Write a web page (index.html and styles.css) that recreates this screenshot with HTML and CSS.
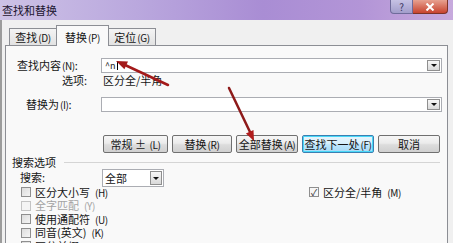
FILE: index.html
```html
<!DOCTYPE html>
<html lang="zh">
<head>
<meta charset="utf-8">
<title>查找和替换</title>
<link rel="stylesheet" href="styles.css">
</head>
<body>
<div class="win">
  <div class="titlebar">
    <span class="title">查找和替换</span>
    <div class="caps">
      <span class="help">?</span>
      <span class="close"><svg width="10" height="8" viewBox="0 0 10 8"><path d="M1.5 0.5 L8.5 7.5 M8.5 0.5 L1.5 7.5" stroke="#fff" stroke-width="2"/></svg></span>
    </div>
  </div>
  <div class="content">
    <div class="tabs">
      <div class="tab">查找<span class="mn">(D)</span></div>
      <div class="tab sel">替换<span class="mn">(P)</span></div>
      <div class="tab">定位<span class="mn">(G)</span></div>
    </div>
    <div class="panel">
      <div class="fields">
        <span class="lbl l1">查找内容<span class="mn">(N)</span>:</span>
        <div class="combo"><span class="val">^n</span><span class="caret"></span><span class="dd"></span></div>
        <span class="lbl l2">选项:</span>
        <span class="optval">区分全/半角</span>
        <span class="lbl l3">替换为<span class="mn">(I)</span>:</span>
        <div class="combo"><span class="dd"></span></div>
      </div>
      <div class="buttons">
        <div class="btn w1">常规 ± <span class="mn">(L)</span></div>
        <div class="btn w2">替换<span class="mn">(R)</span></div>
        <div class="btn w3">全部替换<span class="mn">(A)</span></div>
        <div class="btn w4 default">查找下一处<span class="mn">(F)</span></div>
        <div class="btn w5">取消</div>
      </div>
      <div class="section"><span class="sec-title">搜索选项</span><span class="rule"></span></div>
      <div class="search-row">
        <span class="search-lbl">搜索:</span>
        <div class="select"><span class="sel-val">全部</span><span class="dd"></span></div>
      </div>
      <div class="opts">
        <label class="chk right"><span class="box checked">✓</span>区分全/半角<span class="mn">(M)</span></label>
        <label class="chk"><span class="box"></span>区分大小写<span class="mn">(H)</span></label>
        <label class="chk disabled"><span class="box"></span>全字匹配<span class="mn">(Y)</span></label>
        <label class="chk"><span class="box"></span>使用通配符<span class="mn">(U)</span></label>
        <label class="chk"><span class="box"></span>同音(英文)<span class="mn">(K)</span></label>
        <label class="chk"><span class="box"></span>区分前缀<span class="mn">(X)</span></label>
      </div>
    </div>
  </div>
  <svg class="arrows" width="453" height="243" viewBox="0 0 453 243">
    <line x1="168" y1="85" x2="125" y2="65" stroke="#a31a1a" stroke-width="2.5" stroke-linecap="round"/>
    <polygon points="116,61 128,61.4 124.4,69.2" fill="#a31a1a"/>
    <line x1="229" y1="88" x2="250" y2="132" stroke="#8e1a1a" stroke-width="2.5" stroke-linecap="round"/>
    <polygon points="254,141 253.5,130 245.9,133.6" fill="#b01c1c"/>
  </svg>
</div>
</body>
</html>
```
FILE: styles.css
```css
* { box-sizing: border-box; margin: 0; padding: 0; }
html, body { width: 453px; height: 243px; overflow: hidden; }
body {
  font-family: "Noto Sans CJK SC", "Noto Sans", sans-serif;
  font-size: 11px;
  color: #151515;
  background: #f0f0f0;
}
.mn { font-size: 10px; letter-spacing: -0.4px; margin-left: 1px; }
.win { position: relative; width: 453px; height: 243px; overflow: hidden; }

.titlebar {
  height: 20px;
  display: flex;
  align-items: flex-start;
  background: linear-gradient(to right, #cdc2e6 0%, #baa8de 30%, #a98dd4 58%, #b395d7 80%, #c7aadd 100%);
}
.title { padding-left: 2px; line-height: 20px; font-size: 11px; color: #1d1530; }
.caps { margin-left: auto; margin-right: 5px; display: flex; }
.help {
  width: 23px; height: 14px;
  background: linear-gradient(#c6c2e4, #a29dcb);
  border: 1px solid #6f6b9b; border-top: none;
  border-radius: 0 0 0 4px;
  font-size: 10px; line-height: 13px; text-align: center; color: #3a3560;
}
.close {
  width: 35px; height: 14px;
  background: linear-gradient(#e7a190, #c8432f);
  border: 1px solid #7d3328; border-left: none; border-top: none;
  border-radius: 0 0 4px 0;
  display: flex; align-items: center; justify-content: center;
}

.content {
  height: 223px;
  border-left: 2px solid #9c9c9c;
  padding-left: 3px;
  padding-right: 5px;
}
.tabs { height: 25px; display: flex; align-items: flex-end; padding-left: 4px; }
.tab {
  height: 17px; width: 48px;
  border: 1px solid #8c8e94; border-bottom: none;
  background: linear-gradient(#f4f4f4, #e2e2e2);
  text-align: center; line-height: 17px;
  margin-right: -1px;
  white-space: nowrap;
}
.tab.sel {
  height: 21px; width: 53px;
  background: #f9f9f9;
  margin-bottom: -1px;
  position: relative; z-index: 1;
  line-height: 22px;
}
.panel {
  height: 200px;
  border: 1px solid #8c8e94;
  background: #f9f9f9;
  padding-top: 12px;
}

.fields {
  display: grid;
  grid-template-columns: 95px 341px;
  grid-template-rows: 15px 24px 15px;
}
.lbl { line-height: 15px; white-space: nowrap; }
.l1 { padding-left: 11px; }
.l2 { justify-self: end; padding-right: 14px; line-height: 14px; }
.l3 { padding-left: 20px; }
.optval { padding-left: 2px; line-height: 14px; }
.combo {
  height: 15px;
  border: 1px solid #abadb3;
  background: #fff;
  display: flex; align-items: center;
}
.val { padding-left: 3px; font-size: 9px; line-height: 10px; }
.caret { width: 1px; height: 9px; background: #000; margin-left: 1px; }
.dd {
  margin-left: auto; margin-right: 1px;
  width: 13px; height: 11px;
  border: 1px solid #8f8f8f;
  background: linear-gradient(#f7f7f7, #d9d9d9);
  display: flex; align-items: center; justify-content: center;
}
.dd::after {
  content: "";
  border-left: 3px solid transparent;
  border-right: 3px solid transparent;
  border-top: 3px solid #111;
}

.buttons { margin-top: 23px; padding-left: 97px; display: flex; gap: 4px; }
.btn {
  height: 18px;
  border: 1px solid #707070;
  border-radius: 2px;
  background: linear-gradient(#f6f6f6 0%, #ebebeb 45%, #dcdcdc 55%, #d0d0d0 100%);
  line-height: 16px; text-align: center; white-space: nowrap;
}
.btn.default {
  border-color: #3c7fb1;
  background: linear-gradient(#e8f5fc 0%, #d9f0fc 45%, #bee6fd 55%, #a7d9f5 100%);
  box-shadow: inset 0 0 0 1px #48d8f8;
}
.w1 { width: 65px; }
.w2 { width: 60px; }
.w3 { width: 62px; }
.w4 { width: 72px; }
.w5 { width: 62px; }

.section { margin-top: 2px; height: 14px; display: flex; align-items: center; }
.sec-title { padding-left: 6px; line-height: 14px; }
.rule { flex: 1; margin-left: 8px; margin-right: 7px; border-top: 1px solid #d5d5d5; }

.search-row { height: 16px; display: flex; align-items: flex-start; }
.search-lbl { width: 96px; padding-left: 14px; margin-top: 1px; line-height: 14px; }
.select {
  width: 62px; height: 18px;
  border: 1px solid #abadb3;
  background: #fff;
  display: flex; align-items: center;
  position: relative; z-index: 1;
}
.sel-val { padding-left: 2px; line-height: 14px; }
.select .dd { height: 14px; width: 12px; }

.opts {
  margin-top: 0.5px;
  padding-left: 15px;
  display: grid;
  grid-template-columns: 288px 1fr;
  grid-auto-rows: 13.5px;
}
.chk { grid-column: 1; display: flex; align-items: center; gap: 4px; line-height: 13px; height: 13.5px; white-space: nowrap; }
.chk.right { grid-column: 2; grid-row: 1; }
.chk.disabled { color: #a3a3a3; }
.box {
  flex: none;
  width: 10px; height: 10px;
  border: 1px solid #8f8f8f;
  background: linear-gradient(135deg, #dcdcdc, #f4f4f4);
  display: flex; align-items: center; justify-content: center;
  font-size: 9px; line-height: 9px; color: #2a2a2a;
}
.chk.disabled .box { border-color: #c4c4c4; background: #f4f4f4; }
.box.checked { background: #f6f6f6; }

.arrows { position: absolute; left: 0; top: 0; pointer-events: none; z-index: 5; }
```
